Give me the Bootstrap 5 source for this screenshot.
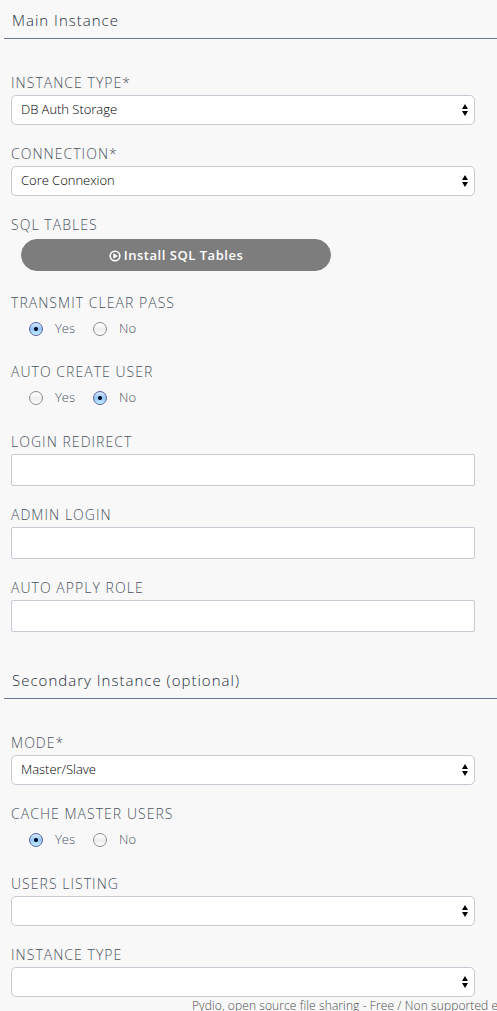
<!DOCTYPE html>
<html lang="en">
<head>
<meta charset="utf-8">
<meta name="viewport" content="width=device-width, initial-scale=1">
<title>Pydio</title>
<link href="https://cdn.jsdelivr.net/npm/bootstrap@5.3.0/dist/css/bootstrap.min.css" rel="stylesheet">
<style>
body{background:#f8f8f8;font-family:"Open Sans",sans-serif;font-weight:300;color:#48535d;height:1011px}
.section-title{margin:0 0 32px 4px;padding-left:8px;border-bottom:1px solid #6b7a90;font-size:15px;font-weight:300;letter-spacing:1.01px;line-height:20px;color:#232e3c;height:39px;padding-top:10px}
.section-title.second{height:50px;padding-top:21px}
.field{margin:0 22px 17px 11px}
.field.loose{margin-bottom:18px}
.field>.form-label{display:block;height:24px;line-height:24px;margin:0;font-size:14px;letter-spacing:1.04px;text-transform:uppercase;white-space:nowrap}
.field .form-select{height:30px;padding:0 24px 2px 9px;font-size:13px;font-weight:300;letter-spacing:-.03px;line-height:26px;color:#000;border:1px solid #c6cad2;border-radius:5px;background:#fff url("data:image/svg+xml,%3Csvg xmlns='http://www.w3.org/2000/svg' viewBox='0 0 6 12'%3E%3Cpath d='M3 0L6 5H0zM0 7H6L3 12z'/%3E%3C/svg%3E") no-repeat right 6px center/6px 12px}
.field .form-control{height:32px;border:1px solid #c6cad2;border-radius:2px}
.install-row{padding:2px 0 3px 10px}
.btn-install{--bs-btn-color:#fff;--bs-btn-bg:#7d7d7d;--bs-btn-border-color:#7d7d7d;--bs-btn-hover-color:#fff;--bs-btn-hover-bg:#6d6d6d;width:310px;height:32px;padding:1px 0 0;font-size:13px;font-weight:600;letter-spacing:.53px;gap:3px}
.choices{height:28px;padding:0 0 1px 18px;font-size:13px;line-height:25px}
.choices label{margin-left:12px;width:38px;padding-bottom:1px}
.choices .form-check-input{width:14px;height:14px;margin:1px 0 0;border:1px solid #8c8c8c;background:linear-gradient(#fff,#eee 55%,#fff)}
.choices .form-check-input:checked{border-color:#5762a5;background:radial-gradient(circle,#06152d 0 1.7px,transparent 2.4px),linear-gradient(#d9eafa,#92c6f7 50%,#c6f0ff)}
.foot{margin:-17px 0 0 192px;font-size:12px;letter-spacing:.1px;line-height:18px;white-space:nowrap;color:#4c4c4c}
</style>
</head>
<body class="overflow-hidden">
<form>
<h2 class="section-title">Main Instance</h2>
<div class="field"><label class="form-label" for="type">Instance Type*</label><select class="form-select" id="type"><option>DB Auth Storage</option></select></div>
<div class="field"><label class="form-label" for="conn">Connection*</label><select class="form-select" id="conn"><option>Core Connexion</option></select></div>
<div class="field"><span class="form-label">SQL Tables</span>
<div class="install-row"><button type="button" class="btn btn-install rounded-pill d-flex align-items-center justify-content-center"><svg width="12" height="12" viewBox="0 0 12 12"><circle cx="6" cy="6" r="4.8" fill="none" stroke="#fff" stroke-width="1.6"/><path d="M4.3 3.3L9 6L4.3 8.7z" fill="#fff"/></svg><span>Install SQL Tables</span></button></div></div>
<div class="field"><span class="form-label">Transmit Clear Pass</span><div class="choices d-flex align-items-center"><input class="form-check-input" type="radio" name="clear" id="c1" checked><label for="c1">Yes</label><input class="form-check-input" type="radio" name="clear" id="c2"><label for="c2">No</label></div></div>
<div class="field loose"><span class="form-label">Auto Create User</span><div class="choices d-flex align-items-center"><input class="form-check-input" type="radio" name="auto" id="a1"><label for="a1">Yes</label><input class="form-check-input" type="radio" name="auto" id="a2" checked><label for="a2">No</label></div></div>
<div class="field"><label class="form-label" for="redir">Login Redirect</label><input class="form-control" id="redir"></div>
<div class="field"><label class="form-label" for="admin">Admin Login</label><input class="form-control" id="admin"></div>
<div class="field"><label class="form-label" for="role">Auto Apply Role</label><input class="form-control" id="role"></div>
<h2 class="section-title second">Secondary Instance (optional)</h2>
<div class="field"><label class="form-label" for="mode">Mode*</label><select class="form-select" id="mode"><option>Master/Slave</option></select></div>
<div class="field loose"><span class="form-label">Cache Master Users</span><div class="choices d-flex align-items-center"><input class="form-check-input" type="radio" name="cache" id="m1" checked><label for="m1">Yes</label><input class="form-check-input" type="radio" name="cache" id="m2"><label for="m2">No</label></div></div>
<div class="field"><label class="form-label" for="list">Users Listing</label><select class="form-select" id="list"></select></div>
<div class="field"><label class="form-label" for="type2">Instance Type</label><select class="form-select" id="type2"></select></div>
</form>
<footer class="foot">Pydio, open source file sharing - Free / Non supported e</footer>
<script src="https://cdn.jsdelivr.net/npm/bootstrap@5.3.0/dist/js/bootstrap.bundle.min.js"></script>
</body>
</html>
